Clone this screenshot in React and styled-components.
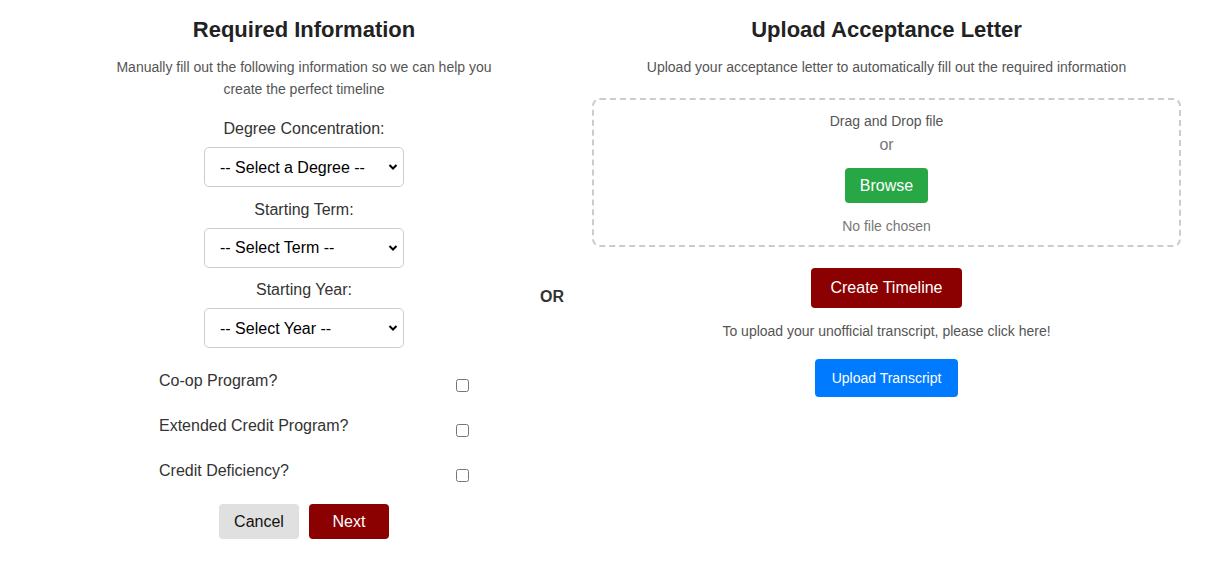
import React, { useState } from 'react'
import styled, { createGlobalStyle } from 'styled-components'

const GlobalStyle = createGlobalStyle`
  body {
    margin: 0;
    background: #fff;
    font-family: "Liberation Sans", Arial, sans-serif;
    color: #333;
  }
`

const Page = styled.div`
  display: flex;
  align-items: flex-start;
  padding: 17px 0 0 104px;
`

const Column = styled.div`
  display: flex;
  flex-direction: column;
  align-items: center;
  width: ${p => p.width}px;
`

const Title = styled.h2`
  margin: 0;
  font-size: 22px;
  line-height: 26px;
  font-weight: 700;
  color: #222;
`

const Subtitle = styled.p`
  margin: 13px 0 0;
  font-size: 14px;
  line-height: 22px;
  color: #555;
  text-align: center;
  max-width: ${p => p.wide ? 'none' : '385px'};
`

const Field = styled.div`
  display: flex;
  flex-direction: column;
  align-items: center;
  margin-top: ${p => p.first ? 19 : 12.5}px;
`

const Label = styled.label`
  font-size: 16px;
  line-height: 19px;
  color: #333;
`

const SelectWrap = styled.div`
  position: relative;
  margin-top: 9px;
  width: 200px;
`

const Select = styled.select`
  appearance: none;
  width: 200px;
  height: 40px;
  padding: 0 15px;
  border: 1px solid #ccc;
  border-radius: 5px;
  background: #fff;
  font-family: inherit;
  font-size: 16px;
  color: #000;
`

const Chevron = styled.svg`
  position: absolute;
  right: 6px;
  top: 16px;
  pointer-events: none;
`

const CheckList = styled.div`
  align-self: flex-start;
  margin: 23px 0 0 55px;
  width: 313px;
`

const CheckRow = styled.div`
  display: flex;
  justify-content: space-between;
  align-items: flex-start;
  height: 45px;
`

const CheckLabel = styled.span`
  font-size: 16px;
  line-height: 19px;
  color: #333;
`

const Checkbox = styled.input`
  width: 13px;
  height: 13px;
  margin: 8px 3px 0 0;
`

const Actions = styled.div`
  display: flex;
  gap: 10px;
  margin-top: -2px;
`

const Button = styled.button`
  border: none;
  border-radius: 4px;
  font-family: inherit;
  font-size: ${p => p.small ? 14 : 16}px;
  padding: 0 ${p => p.pad || 0}px;
  width: ${p => p.w ? `${p.w}px` : 'auto'};
  height: ${p => p.h || 35}px;
  margin-top: ${p => p.mt || 0}px;
  background: ${p => p.bg};
  color: ${p => p.fg || '#fff'};
  cursor: pointer;
`

const Or = styled.div`
  align-self: flex-start;
  margin: 271px 28px 0 36px;
  font-size: 16px;
  font-weight: 700;
  color: #333;
`

const DropZone = styled.div`
  box-sizing: border-box;
  width: 589px;
  height: 149px;
  margin-top: 20px;
  border: 2px dashed #ccc;
  border-radius: 8px;
  display: flex;
  flex-direction: column;
  align-items: center;
  padding-top: 12px;
`

const DropText = styled.div`
  font-size: ${p => p.size || 14}px;
  line-height: 18px;
  color: ${p => p.color || '#555'};
  margin-top: ${p => p.mt || 0}px;
`

const Note = styled.p`
  margin: 14px 0 0;
  font-size: 14px;
  line-height: 18px;
  color: #555;
`

const fields = [
  { label: 'Degree Concentration:', placeholder: '-- Select a Degree --' },
  { label: 'Starting Term:', placeholder: '-- Select Term --' },
  { label: 'Starting Year:', placeholder: '-- Select Year --' },
]

const checks = ['Co-op Program?', 'Extended Credit Program?', 'Credit Deficiency?']

const App = () => {
  const [fileName] = useState('No file chosen')

  return (
    <>
      <GlobalStyle />
      <Page>
        <Column width={400}>
          <Title>Required Information</Title>
          <Subtitle>
            Manually fill out the following information so we can help you create the perfect timeline
          </Subtitle>
          {fields.map((f, i) => (
            <Field key={f.label} first={i === 0}>
              <Label>{f.label}</Label>
              <SelectWrap>
                <Select defaultValue="">
                  <option value="">{f.placeholder}</option>
                </Select>
                <Chevron width="10" height="8" viewBox="0 0 10 8">
                  <path d="M1.5 2 L5 5.5 L8.5 2" fill="none" stroke="#000" strokeWidth="2" />
                </Chevron>
              </SelectWrap>
            </Field>
          ))}
          <CheckList>
            {checks.map(c => (
              <CheckRow key={c}>
                <CheckLabel>{c}</CheckLabel>
                <Checkbox type="checkbox" />
              </CheckRow>
            ))}
          </CheckList>
          <Actions>
            <Button bg="#e0e0e0" fg="#111" w={80}>Cancel</Button>
            <Button bg="#8b0000" w={80}>Next</Button>
          </Actions>
        </Column>

        <Or>OR</Or>

        <Column width={589}>
          <Title>Upload Acceptance Letter</Title>
          <Subtitle wide>
            Upload your acceptance letter to automatically fill out the required information
          </Subtitle>
          <DropZone>
            <DropText>Drag and Drop file</DropText>
            <DropText size={16} color="#777" mt={6}>or</DropText>
            <Button bg="#28a745" pad={15} mt={14}>Browse</Button>
            <DropText color="#777" mt={14}>{fileName}</DropText>
          </DropZone>
          <Button bg="#8b0000" h={40} pad={19} mt={21}>Create Timeline</Button>
          <Note>To upload your unofficial transcript, please click here!</Note>
          <Button bg="#007bff" h={38} pad={17} mt={19} small>Upload Transcript</Button>
        </Column>
      </Page>
    </>
  )
}

export default App
